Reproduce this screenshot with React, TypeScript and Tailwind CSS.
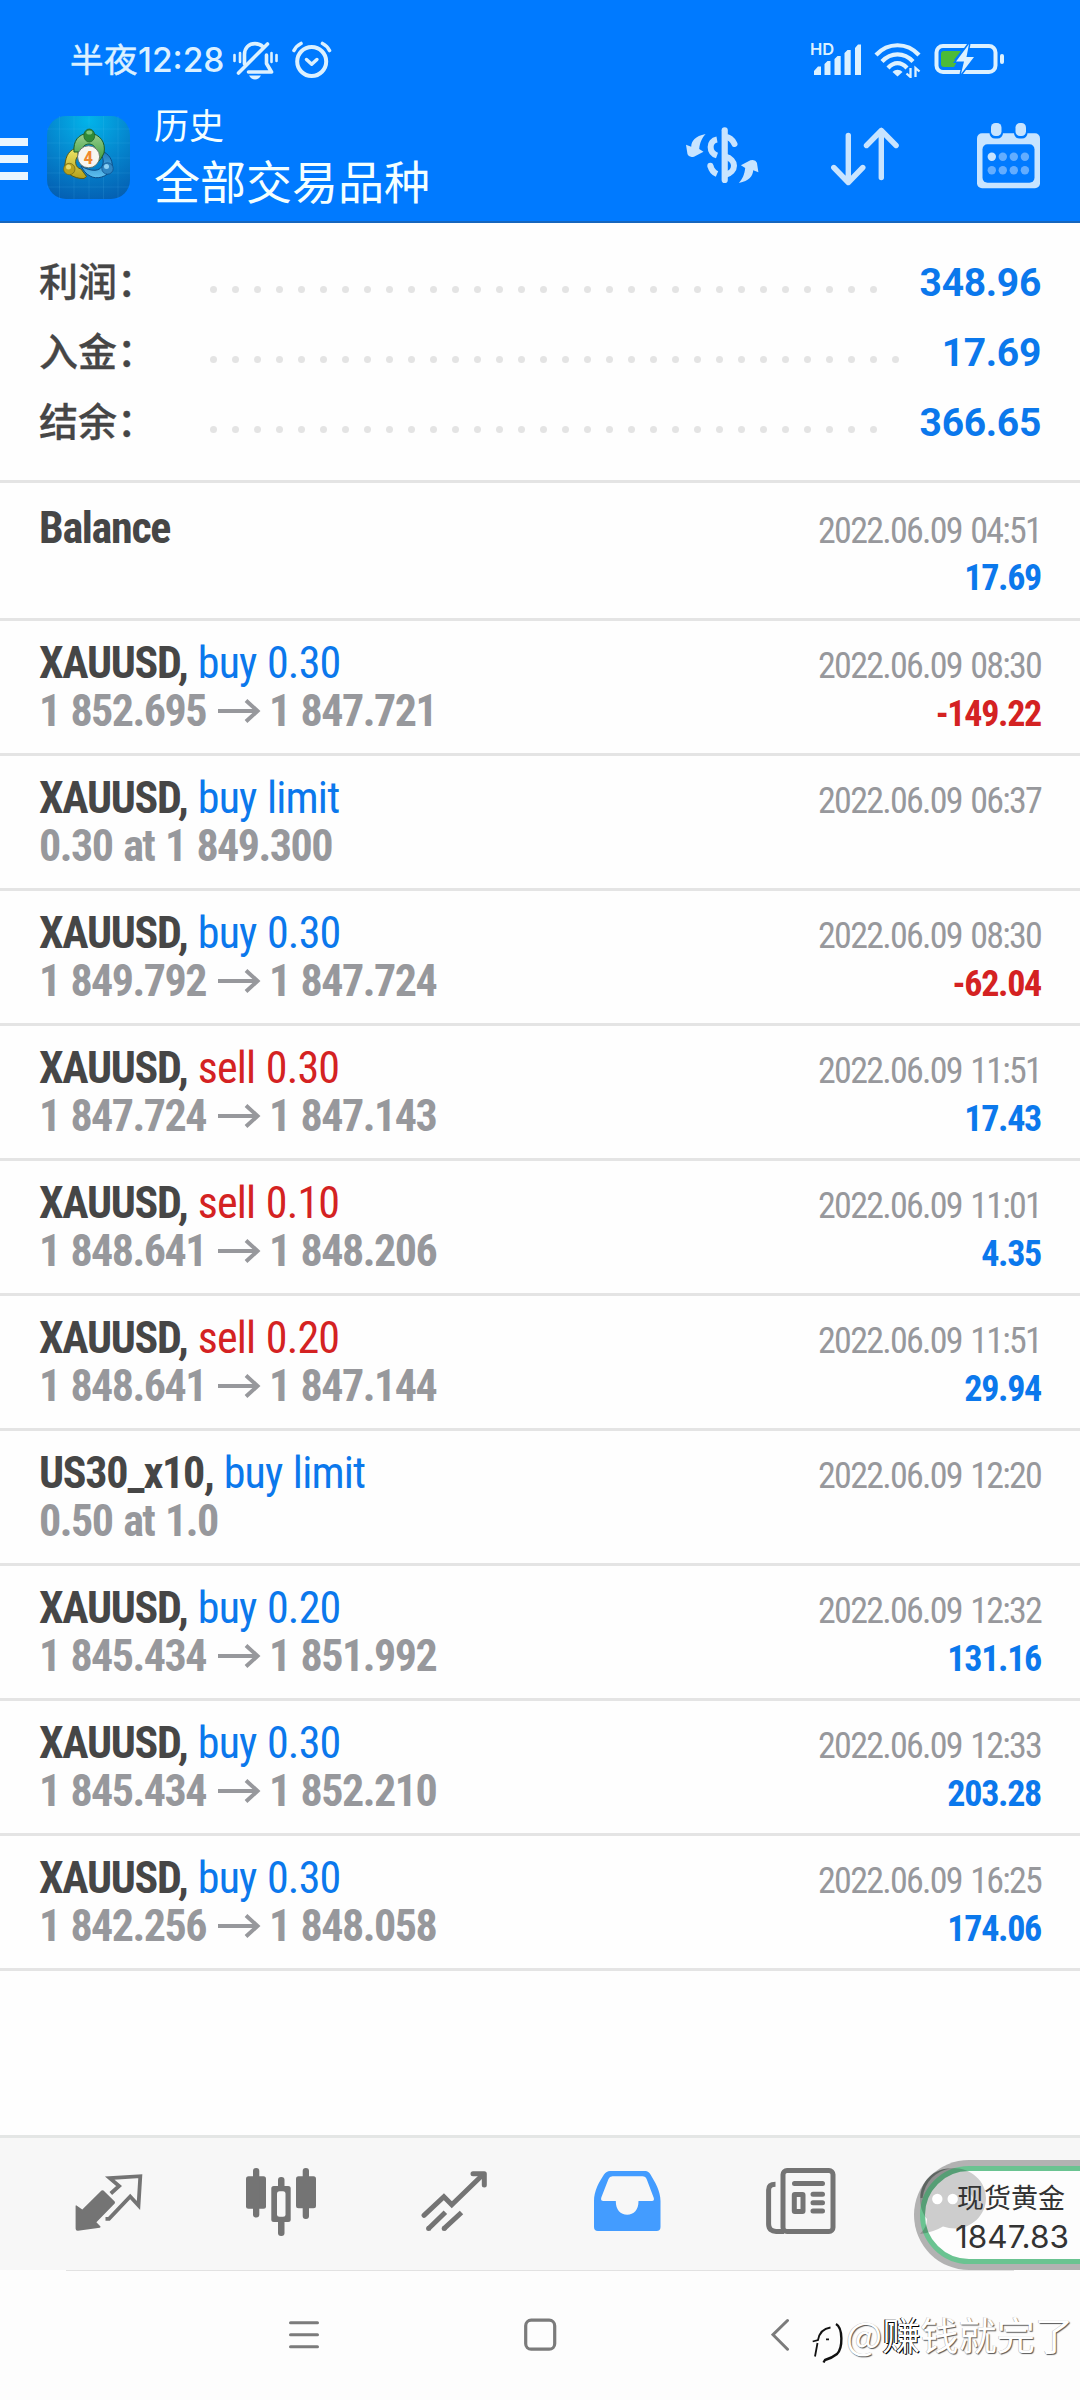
import type { ReactNode } from "react";

interface Deal {
  symbol: string;
  action?: string;
  side?: "buy" | "sell";
  from?: string;
  to?: string;
  note?: string;
  time: string;
  profit?: string;
}

const deals: Deal[] = [
  { symbol: "Balance", time: "2022.06.09 04:51", profit: "17.69" },
  { symbol: "XAUUSD,", action: "buy 0.30", side: "buy", from: "1 852.695", to: "1 847.721", time: "2022.06.09 08:30", profit: "-149.22" },
  { symbol: "XAUUSD,", action: "buy limit", side: "buy", note: "0.30 at 1 849.300", time: "2022.06.09 06:37" },
  { symbol: "XAUUSD,", action: "buy 0.30", side: "buy", from: "1 849.792", to: "1 847.724", time: "2022.06.09 08:30", profit: "-62.04" },
  { symbol: "XAUUSD,", action: "sell 0.30", side: "sell", from: "1 847.724", to: "1 847.143", time: "2022.06.09 11:51", profit: "17.43" },
  { symbol: "XAUUSD,", action: "sell 0.10", side: "sell", from: "1 848.641", to: "1 848.206", time: "2022.06.09 11:01", profit: "4.35" },
  { symbol: "XAUUSD,", action: "sell 0.20", side: "sell", from: "1 848.641", to: "1 847.144", time: "2022.06.09 11:51", profit: "29.94" },
  { symbol: "US30_x10,", action: "buy limit", side: "buy", note: "0.50 at 1.0", time: "2022.06.09 12:20" },
  { symbol: "XAUUSD,", action: "buy 0.20", side: "buy", from: "1 845.434", to: "1 851.992", time: "2022.06.09 12:32", profit: "131.16" },
  { symbol: "XAUUSD,", action: "buy 0.30", side: "buy", from: "1 845.434", to: "1 852.210", time: "2022.06.09 12:33", profit: "203.28" },
  { symbol: "XAUUSD,", action: "buy 0.30", side: "buy", from: "1 842.256", to: "1 848.058", time: "2022.06.09 16:25", profit: "174.06" },
];

const totals = [
  { label: "利润：", value: "348.96", dots: 31 },
  { label: "入金：", value: "17.69", dots: 32 },
  { label: "结余：", value: "366.65", dots: 31 },
];

function StatusBar() {
  return (
    <div className="flex h-[100px] items-start justify-between pl-[70px] pr-[76px] pt-[40px] text-[#dcf1ff]">
      <div className="flex items-center">
        <div className="flex h-[40px] w-[163px] items-center font-['Inter','Noto_Sans_CJK_SC',sans-serif] text-[33.5px] font-medium leading-[40px] whitespace-nowrap">
          <span className="w-[68px] font-normal tracking-[0.5px] [-webkit-text-stroke:0.5px_#dcf1ff]">半夜</span>
          <span>12:28</span>
        </div>
        <svg className="h-[39px] w-[45px]" viewBox="0 0 45 39" fill="none" stroke="currentColor" strokeWidth="3.6" strokeLinecap="round">
          <path d="M11.5 23V13.5C11.5 6.500 16 2.600 22 2.600c3.500 0 6 1.200 8 3.200" />
          <path d="M33.500 14v8.500L38.500 31H15.500" strokeLinejoin="round" />
          <path d="M34.500 3 5.500 32" />
          <path d="M1.500 14v6M7 12v9M43.500 14v6M38.500 12v9" strokeWidth="2.600" />
          <path d="M16 34.500h12c-1.500 2.600-3.500 4-6 4s-4.500-1.400-6-4z" fill="currentColor" stroke="none" />
        </svg>
        <svg className="ml-[14px] h-[38px] w-[40px]" viewBox="0 0 40 38" fill="none" stroke="currentColor" strokeLinecap="round">
          <circle cx="19.700" cy="20.500" r="14.500" strokeWidth="4" />
          <path d="m14.500 18.500 5.200 4.700 5.200-4.700" strokeWidth="3.500" strokeLinejoin="round" />
          <path d="M2 9.500C3.500 6.500 6 4 9 2.500M37.500 9.500C36 6.500 33.500 4 30.500 2.500" strokeWidth="3.600" />
        </svg>
      </div>

      <div className="flex items-start">
        <svg className="h-[38px] w-[52px]" viewBox="0 0 52 38" fill="currentColor">
          <text x="-1" y="15" fontFamily="Inter, sans-serif" fontSize="16.500" fontWeight="600">HD</text>
          <path d="M3 35v-4l4-4.500h3V35zM13.500 35V24l3-3h3v14zM23.500 35V19l3-3h3.200v19zM33.500 35V13l3-3h3.200v25zM44 35V8l3-3.500h3V35z" />
        </svg>
        <svg className="ml-[11px] h-[38px] w-[48px]" viewBox="0 0 48 38" fill="none" stroke="currentColor" strokeWidth="4.200">
          <path d="M2 15C14 2 33 2 45 15" />
          <path d="M8 21.500C17 12 30 12 39 21.500" />
          <path d="M14 28C20 21.500 27 21.500 33 28" />
          <path d="M18.500 32c3-3 7-3 10 0l-5 4.500z" fill="currentColor" stroke="none" />
          <path d="M36.500 28v9l-4-3.500M41.500 37v-9l4 3.500" strokeWidth="2.300" />
        </svg>
        <svg className="ml-[12px] h-[38px] w-[70px]" viewBox="0 0 70 38" fill="none">
          <rect x="2.500" y="6" width="59" height="26" rx="6.500" stroke="currentColor" strokeWidth="4" />
          <rect x="66" y="14" width="4" height="10" rx="2" fill="currentColor" />
          <path d="M10 11h17l-7 9h4l-4 7H10a3 3 0 0 1-3-3V14a3 3 0 0 1 3-3z" fill="#4cbb38" />
          <path d="M35 4 22 21.500h8L27 34l13-17h-7.500z" fill="currentColor" stroke="#007aff" strokeWidth="3" paintOrder="stroke" />
        </svg>
      </div>
    </div>
  );
}

function AppLogo() {
  return (
    <svg className="h-[83px] w-[83px]" viewBox="0 0 83 83">
      <defs>
        <radialGradient id="tile" cx="0.500" cy="0.050" r="1">
          <stop offset="0" stopColor="#02b4ea" />
          <stop offset="0.550" stopColor="#0583cc" />
          <stop offset="1" stopColor="#045fb2" />
        </radialGradient>
        <linearGradient id="green" x1="0" y1="0" x2="0" y2="1">
          <stop offset="0" stopColor="#9bd08f" />
          <stop offset="1" stopColor="#3b9b3e" />
        </linearGradient>
        <linearGradient id="yellow" x1="0" y1="0" x2="0" y2="1">
          <stop offset="0" stopColor="#efe86a" />
          <stop offset="1" stopColor="#b5a01a" />
        </linearGradient>
        <linearGradient id="sky" x1="0" y1="0" x2="0" y2="1">
          <stop offset="0" stopColor="#1d78bd" />
          <stop offset="1" stopColor="#5fc0ef" />
        </linearGradient>
      </defs>
      <rect width="83" height="83" rx="19" fill="url(#tile)" />
      <path d="M12.500 0v83M27 0v83M42 0v83M56.500 0v83M71 0v83M0 13h83M0 27h83M0 42h83M0 57h83M0 71h83" stroke="#6fd0f5" strokeOpacity="0.120" />
      <path d="M31 32C22 33 19 40 18 48c-1 8 8 15 19 14.500l2.500-2L34 53c-6-1-7-9-3-13z" fill="url(#yellow)" stroke="#5d5a12" />
      <path d="M57 36c7 4 9 10 8 17-5 8-15 11-22 7-4-2-7-6-9-10 10 6 20 6 22-2 1-4-1-8-2-10z" fill="url(#sky)" stroke="#0b4c86" />
      <path d="M27 36C26 25 31 18 42 17c11 1 17 9 15 20q-3 7-6 9l-2-12c-1-4-4-6-7-6-4 0-7 3-9 8z" fill="url(#green)" stroke="#1c5c28" />
      <ellipse cx="42.300" cy="19.500" rx="5.500" ry="6.500" fill="#2f8a37" stroke="#1c5c28" strokeWidth="0.700" />
      <ellipse cx="42.300" cy="16.500" rx="3" ry="2" fill="#7cc57a" />
      <circle cx="22.300" cy="53" r="5.700" fill="#b9a21e" stroke="#6d6614" strokeWidth="0.700" />
      <circle cx="21.500" cy="51" r="2.500" fill="#e6da6c" />
      <circle cx="60.500" cy="52.500" r="5.700" fill="#2f86c4" stroke="#0b4c86" strokeWidth="0.700" />
      <circle cx="59.500" cy="50.500" r="2.500" fill="#8dd0f3" />
      <circle cx="41.600" cy="40.800" r="11" fill="#f7f5f0" stroke="#54635a" strokeWidth="0.800" />
      <text x="41.300" y="47.500" textAnchor="middle" fontFamily="Roboto, sans-serif" fontSize="19" fontWeight="700" fill="#f0882e">4</text>
    </svg>
  );
}

function Header() {
  return (
    <header className="h-[223px] border-b-2 border-[#1766bd] bg-[#007aff]">
      <StatusBar />
      <div className="flex items-start">
        <div className="flex w-[28px] flex-col gap-[9px] pt-[38px]">
          <div className="h-[8px] bg-[#e9f6ff]" />
          <div className="h-[8px] bg-[#e9f6ff]" />
          <div className="h-[8px] bg-[#e9f6ff]" />
        </div>
        <div className="ml-[19px] pt-[16px]">
          <AppLogo />
        </div>
        <div className="ml-[24px] flex-1 pt-[3px] font-['Noto_Sans_CJK_SC',sans-serif] text-[#f4ffff]">
          <div className="text-[35px] leading-[42px]">历史</div>
          <div className="mt-[7px] text-[46px] leading-[54px]">全部交易品种</div>
        </div>
        <div className="flex items-start pr-[40px] pt-[23px] text-[#c8e4ff]">
          <svg className="mt-[4px] h-[57px] w-[73px]" viewBox="0 0 73 57" fill="none" stroke="currentColor" strokeWidth="6">
            <path d="M38.700 3.300V53" strokeLinecap="round" strokeWidth="6.200" />
            <path d="M31 12.500C22.500 14 22.500 25.500 31 28.500M24.500 39c1 4.500 3 6.500 6.500 8" />
            <circle cx="24.300" cy="38.800" r="3" fill="currentColor" stroke="none" />
            <path d="M39 10c5 0 7.500 2.500 9.500 7" strokeLinecap="round" />
            <path d="M39 29.500c12 3 12 15.500 0 18.500" />
            <path d="M19.600 7C9 9 5.500 14 5.200 19.700L0 17.800l1.500 9.500Q3 31 8 29.700l9.500-5L13.200 22C14 15 16 11 19.600 7z" fill="currentColor" stroke="none" />
            <path d="M52.800 56c10.600-2 14.100-7 14.400-12.700l5.200 1.900-1.500-9.500Q69.400 32 64.400 33.300l-9.500 5 4.300 2.700C58.400 48 56.400 52 52.800 56z" fill="currentColor" stroke="none" />
          </svg>
          <svg className="ml-[72px] mt-[4px] h-[60px] w-[68px]" viewBox="0 0 68 60" fill="none" stroke="currentColor" strokeWidth="5.400" strokeLinecap="round" strokeLinejoin="round">
            <path d="M17.300 8.500V55.500M2.800 40.500l14.500 15 14.500-15" />
            <path d="M50.300 50.500V3.500M35.500 18.500l14.800-15 14.800 15" />
          </svg>
          <svg className="ml-[78px] h-[66px] w-[63px]" viewBox="0 0 63 66">
            <rect y="10.300" width="63" height="55" rx="5" fill="currentColor" />
            <rect x="12.500" y="-2" width="13.500" height="17.500" rx="5.500" fill="#007aff" />
            <rect x="37" y="-2" width="13.500" height="17.500" rx="5.500" fill="#007aff" />
            <rect x="14" width="10.500" height="13" rx="4.500" fill="currentColor" />
            <rect x="38.500" width="10.500" height="13" rx="4.500" fill="currentColor" />
            <rect x="5.500" y="21.300" width="52" height="38.500" rx="5" fill="#007aff" />
            <g fill="#63adff">
              <circle cx="14.800" cy="33.700" r="4.200" fill="#c8e4ff" />
              <circle cx="25.800" cy="33.700" r="4.200" />
              <circle cx="36.800" cy="33.700" r="4.200" />
              <circle cx="47.900" cy="33.700" r="4.200" />
              <circle cx="14.800" cy="47.300" r="4.200" />
              <circle cx="25.800" cy="47.300" r="4.200" />
              <circle cx="36.800" cy="47.300" r="4.200" />
              <circle cx="47.900" cy="47.300" r="4.200" />
            </g>
          </svg>
        </div>
      </div>
    </header>
  );
}

function Totals() {
  return (
    <section className="h-[260px] border-b-3 border-[#e4e4e4] px-[39px] pt-[24px]">
      {totals.map((row) => (
        <div key={row.label} className="flex h-[70px] items-center">
          <span className="w-[171px] pb-[5px] font-['Noto_Sans_CJK_SC',sans-serif] text-[39px] font-medium leading-[65px] whitespace-nowrap text-[#464646] [-webkit-text-stroke:0.3px_#464646]">
            {row.label}
          </span>
          <span className="flex gap-[15px] pt-[14px]">
            {Array.from({ length: row.dots }, (_, i) => (
              <i key={i} className="size-[7px] rounded-full bg-[#e4e4e4]" />
            ))}
          </span>
          <span className="flex-1 pt-[3px] text-right font-['Roboto',sans-serif] text-[39px] font-bold tracking-[-0.3px] text-[#0b78ec] font-stretch-normal">
            {row.value}
          </span>
        </div>
      ))}
    </section>
  );
}

function DealRow({ deal }: { deal: Deal }) {
  const loss = deal.profit?.startsWith("-");

  return (
    <li className="h-[135px] border-b-3 border-[#e4e4e4] px-[39px] pt-[18px] first:h-[138px] first:pt-[21px]">
      <div className="flex h-[48px] items-baseline justify-between leading-[48px]">
        <span className="text-[44px] tracking-[-0.8px] whitespace-pre [word-spacing:1px]">
          <b className="font-bold tracking-[-1.3px] text-[#464646]">{deal.symbol}</b>
          {deal.action && <span className={deal.side === "sell" ? "text-[#d42222]" : "text-[#0b78ec]"}> {deal.action}</span>}
        </span>
        <span className="text-[36px] tracking-[-1.75px] text-[#97989c] [word-spacing:2px]">{deal.time}</span>
      </div>
      <div className="flex h-[48px] items-baseline font-bold leading-[48px]">
        {deal.note && <span className="text-[44px] tracking-[-1.5px] text-[#97989c] [word-spacing:2px]">{deal.note}</span>}
        {deal.from && (
          <span className="text-[44px] tracking-[-1.5px] whitespace-nowrap text-[#97989c] [word-spacing:2px]">
            {deal.from}
            <svg className="mb-[7px] ml-[12px] mr-[8px] inline-block h-[24px] w-[43px]" viewBox="0 0 43 24" fill="none" stroke="currentColor" strokeWidth="4">
              <path d="M0 12h40M28 1.500 39.500 12 28 22.500" />
            </svg>
            {deal.to}
          </span>
        )}
        {deal.profit && (
          <span className={`ml-auto text-[36px] leading-[53px] tracking-[-1.3px] ${loss ? "text-[#d42222]" : "text-[#0b78ec]"}`}>
            {deal.profit}
          </span>
        )}
      </div>
    </li>
  );
}

function Tab({ children, active }: { children: ReactNode; active?: boolean }) {
  return <div className={active ? "text-[#439cff]" : "text-[#747474]"}>{children}</div>;
}

function TabBar() {
  return (
    <nav className="flex h-[135px] items-start border-t-3 border-[#e4e6e5] bg-[#f7f7f7] pl-[75px] pt-[30px]">
      <Tab>
        <svg className="mt-[5px] h-[60px] w-[68px]" viewBox="0 0 68 60">
          <path d="M1.500 32.500 7.300 36.500 26.500 17.500q1-.7 2 0L39.700 28.500q.6 1 0 2L21.400 49.300l4.100 4.300q.3 1-.8 1.200L3 57.800Q.6 58 .6 55.500V33q.2-1 .9-.5z" fill="currentColor" />
          <path d="m35.800 20.500 8.300-7.500-9.300-7.800 30.500-2-1.800 29.300-8.300-9L34 45.800h-3.500" fill="none" stroke="currentColor" strokeWidth="3.800" />
        </svg>
      </Tab>
      <Tab>
        <svg className="ml-[103px] h-[68px] w-[70px]" viewBox="0 0 70 68" fill="currentColor">
          <rect y="8.300" width="20" height="32.500" rx="2.500" />
          <rect x="7" width="6.300" height="49.500" rx="3" />
          <rect x="32" y="9" width="6.500" height="59" rx="3" />
          <rect x="25.300" y="18" width="19.400" height="36" rx="2.500" />
          <rect x="31" y="23.300" width="8.500" height="25.500" rx="2.500" fill="#f7f7f7" />
          <rect x="50" y="8.300" width="20" height="32" rx="2.500" />
          <rect x="56.700" width="6.300" height="51" rx="3" />
        </svg>
      </Tab>
      <Tab>
        <svg className="ml-[105px] mt-[3px] h-[61px] w-[67px]" viewBox="0 0 67 61" fill="none" stroke="currentColor" strokeWidth="5">
          <path d="M3 44.300 22.900 25.700l7.900 8L61 4.500" strokeLinecap="round" />
          <path d="M52 2.700h11.300V14" strokeLinecap="round" strokeLinejoin="round" />
          <path d="m7.400 57.700 17-16.500M23 57.700 40.500 41.500" />
          <circle cx="7.600" cy="57.500" r="2.500" fill="currentColor" stroke="none" />
          <circle cx="23.200" cy="57.500" r="2.500" fill="currentColor" stroke="none" />
        </svg>
      </Tab>
      <Tab active>
        <svg className="ml-[106px] mt-[3px] h-[60px] w-[67px]" viewBox="0 0 67 60">
          <path
            fillRule="evenodd"
            fill="currentColor"
            d="M16 0H51.500Q54.500 0 56.500 3.500C61 11 66.500 20 66.500 30V56Q66.500 60 62.500 60H4Q0 60 0 56V30C0 20 5 11 10 3.500Q12.500 0 16 0zM18.500 5.300Q15.500 5.300 14.500 8L7.300 26.500Q6.300 30 9.500 30H21.800C21.800 39 26.500 43.700 33.200 43.700S44.500 39 44.500 30H58Q60.500 30 59.800 27L52.800 8.500Q51.500 5.300 48.500 5.300z"
          />
        </svg>
      </Tab>
      <Tab>
        <svg className="ml-[105px] h-[66px] w-[70px]" viewBox="0 0 70 66" fill="none" stroke="currentColor" strokeWidth="5">
          <rect x="17" y="2.600" width="50" height="60.800" rx="4" />
          <path d="M9.500 16.300C5 16.300 2.600 18 2.600 22V56c0 5 3 7.400 7.500 7.400H18" />
          <path d="M28.500 15.600H56.500M47 26.300h9.500M47 34.700h9.500M47 43h9.500" strokeLinecap="round" />
          <rect x="28.300" y="26.500" width="8.700" height="16.900" rx="0.500" />
        </svg>
      </Tab>
    </nav>
  );
}

// Quote bubble that floats over the right end of the tab bar
function QuoteBubble() {
  return (
    <div className="absolute left-[914px] top-[2160px] h-[110px] w-[166px] overflow-hidden">
      <div className="h-[110px] w-[220px] rounded-full bg-[#b2b2b2] p-[6px]">
        <div className="h-[98px] rounded-full border-[5px] border-[#6ac391] bg-[#fdfdfd]" />
      </div>
      <svg className="absolute left-[5px] top-[7px] h-[68px] w-[68px]" viewBox="0 0 68 68">
        <path d="M34 1C52 1 67 14 67 31S53 61.500 36 61.500q-6 0-12-2Q14 65.500 1 67 8 60 8 52C3 46 1 39 1 31 1 14 16 1 34 1z" fill="#000" fillOpacity="0.190" />
        <path d="M1.500 31C1.500 14 15 1.500 31 1.500 17 4 6 14 3.500 31z" fill="#3c4a42" fillOpacity="0.600" />
        <circle cx="18.300" cy="32" r="5.200" fill="#fff" />
        <circle cx="33.700" cy="32" r="5.200" fill="#fff" />
        <circle cx="49" cy="32" r="5.200" fill="#fff" fillOpacity="0.500" />
      </svg>
      <div className="absolute left-[43px] top-[17px] whitespace-nowrap text-[#333]">
        <div className="font-['Noto_Sans_CJK_SC',sans-serif] text-[27px] leading-[40px]">现货黄金</div>
        <div className="-ml-[2px] font-['Inter','Noto_Sans_CJK_SC',sans-serif] text-[31.5px] leading-[40px]">1847.83</div>
      </div>
    </div>
  );
}

function SystemNav() {
  return (
    <footer className="h-[130px] bg-[#fdfdfd] text-[#7b7b7b]">
      <div className="mx-[66px] h-px bg-[#e2e2e2]" />
      <div className="flex items-center pl-[289px] pt-[46px]">
        <svg className="h-[34px] w-[30px]" viewBox="0 0 30 34" stroke="currentColor" strokeWidth="3" strokeLinecap="round">
          <path d="M1.500 5.700h27M1.500 17.700h27M1.500 29.700h27" />
        </svg>
        <svg className="ml-[205px] h-[34px] w-[33px]" viewBox="0 0 33 34" fill="none" stroke="currentColor" strokeWidth="3.200">
          <rect x="1.700" y="3.200" width="29" height="29" rx="5.500" />
        </svg>
        <svg className="ml-[214px] h-[34px] w-[20px]" viewBox="0 0 20 34" fill="none" stroke="currentColor" strokeWidth="3" strokeLinecap="round">
          <path d="M16.500 3.500 2 17.700l14.500 14.500" />
        </svg>
      </div>
    </footer>
  );
}

function Signature() {
  return (
    <div className="absolute left-[812px] top-[2314px] flex h-[50px] items-start whitespace-nowrap">
      <svg className="mt-[6px] h-[44px] w-[34px]" viewBox="0 0 34 44" fill="none" stroke="#111" strokeWidth="1.800">
        <path d="M.7 21.500 6 20Q8 9 18.500 7.500M5.500 23 3 36.500M14 19.300h3" />
        <path d="M24 4C31 8 31 28 25 34Q20 38 13 40L11.500 42.500" strokeWidth="2.400" />
      </svg>
      <div className="font-['Noto_Sans_CJK_SC',sans-serif] text-[38.2px] leading-[40px] text-white [text-shadow:1px_1px_1px_#555,-0.5px_-0.5px_0_#bbb]">
        @<span className="[text-shadow:-1px_0_0_#000,1px_1px_0_#000]">赚</span>钱就完了
      </div>
    </div>
  );
}

export default function App() {
  return (
    <div className="relative flex h-[2400px] w-[1080px] flex-col overflow-hidden bg-[#fefefe] font-['Roboto_Condensed','Roboto',sans-serif] font-stretch-condensed">
      <Header />
      <Totals />
      <ul className="flex-1">
        {deals.map((deal, i) => (
          <DealRow key={i} deal={deal} />
        ))}
      </ul>
      <TabBar />
      <SystemNav />
      <QuoteBubble />
      <Signature />
    </div>
  );
}
